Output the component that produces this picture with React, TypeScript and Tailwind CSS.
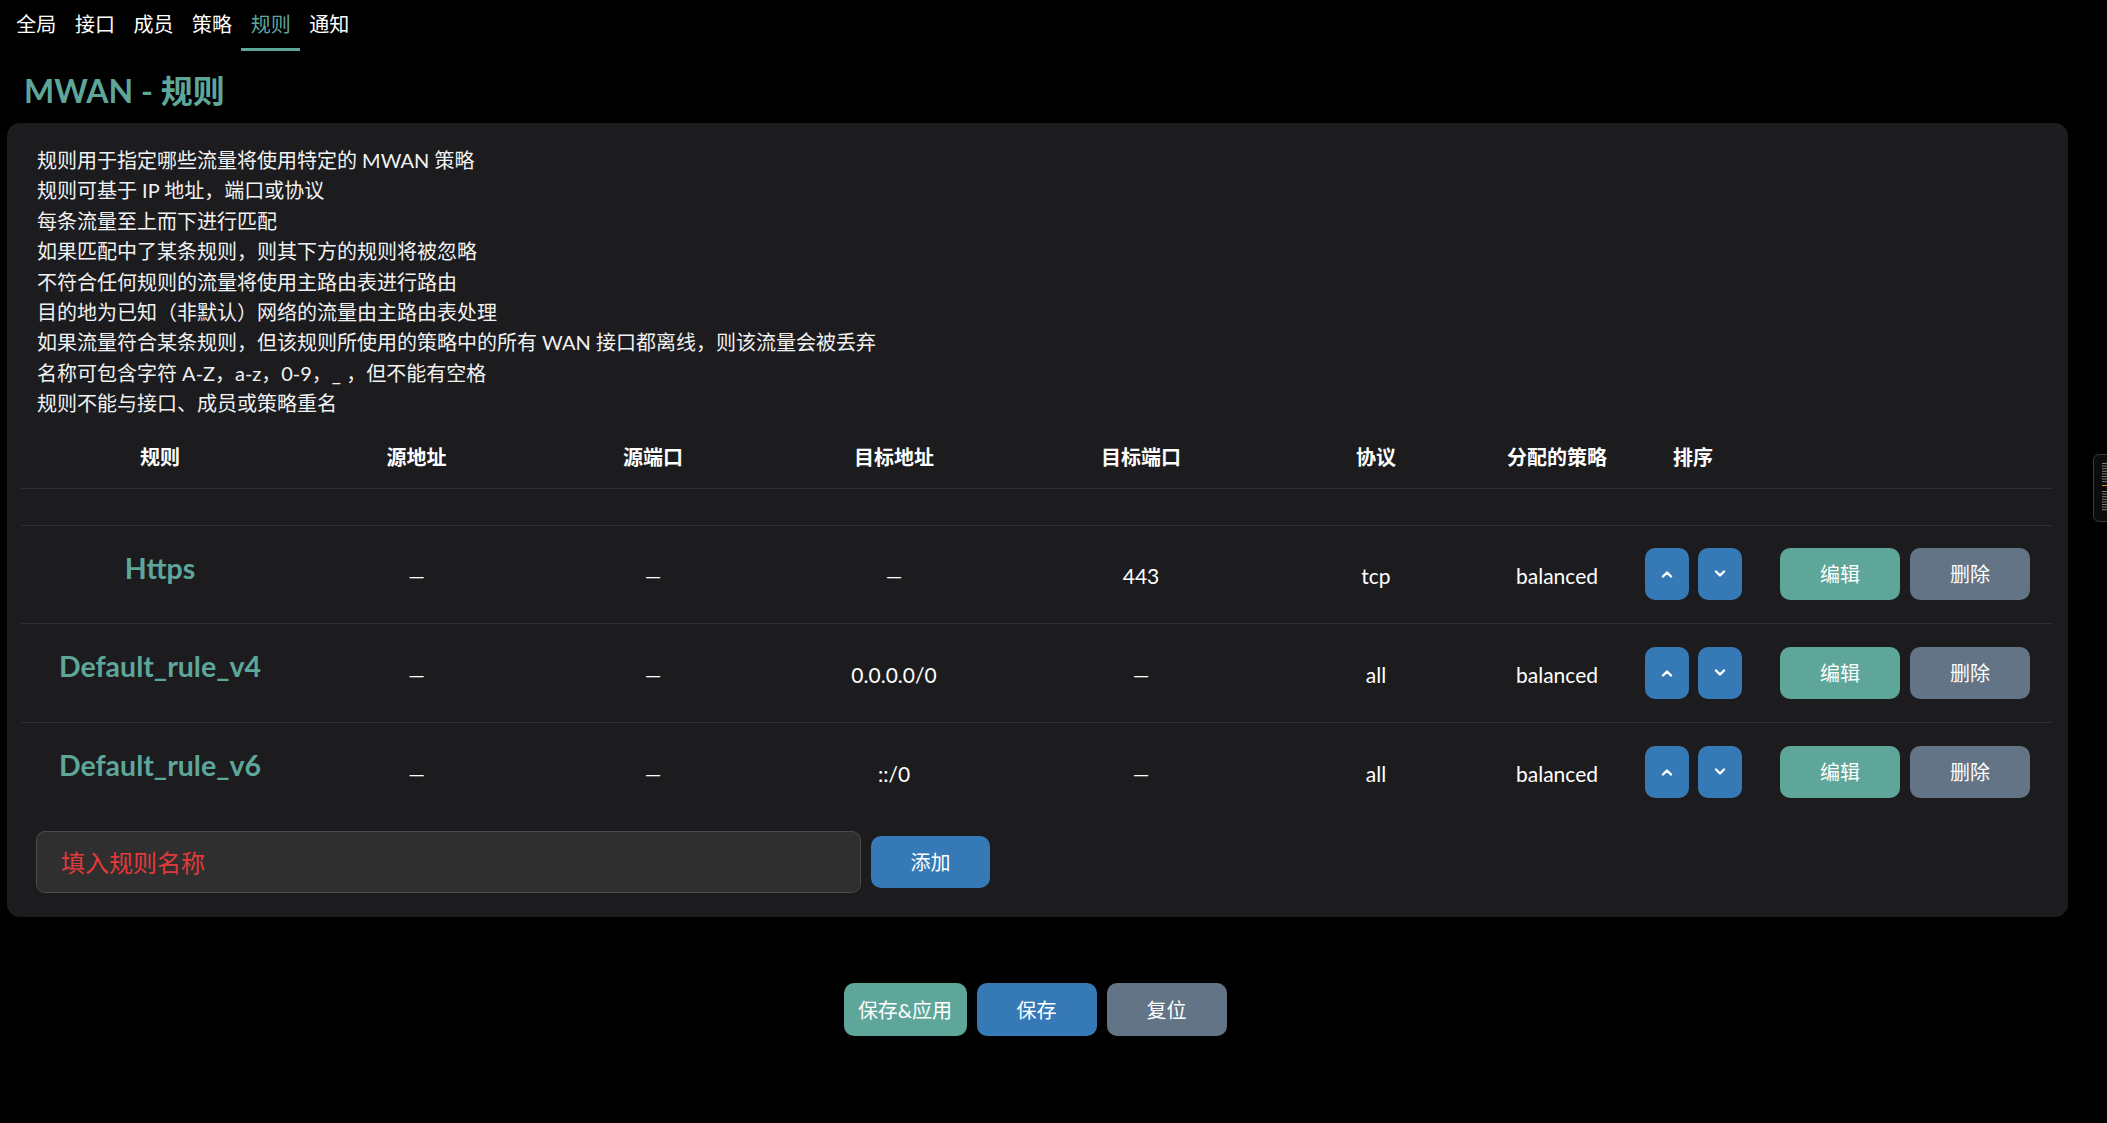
import React from "react";

const tabs = ["全局", "接口", "成员", "策略", "规则", "通知"];

const desc = [
  "规则用于指定哪些流量将使用特定的 MWAN 策略",
  "规则可基于 IP 地址，端口或协议",
  "每条流量至上而下进行匹配",
  "如果匹配中了某条规则，则其下方的规则将被忽略",
  "不符合任何规则的流量将使用主路由表进行路由",
  "目的地为已知（非默认）网络的流量由主路由表处理",
  "如果流量符合某条规则，但该规则所使用的策略中的所有 WAN 接口都离线，则该流量会被丢弃",
  "名称可包含字符 A-Z，a-z，0-9，_ ，但不能有空格",
  "规则不能与接口、成员或策略重名",
];

const headers = ["规则", "源地址", "源端口", "目标地址", "目标端口", "协议", "分配的策略", "排序", ""];

const rows = [
  { name: "Https", src: "—", sport: "—", dst: "—", dport: "443", proto: "tcp", policy: "balanced" },
  { name: "Default_rule_v4", src: "—", sport: "—", dst: "0.0.0.0/0", dport: "—", proto: "all", policy: "balanced" },
  { name: "Default_rule_v6", src: "—", sport: "—", dst: "::/0", dport: "—", proto: "all", policy: "balanced" },
];

const grid = "grid grid-cols-[278px_235px_238px_244px_250px_220px_142px_130px_1fr] items-center";

function Chevron({ up }: { up?: boolean }) {
  return (
    <svg width="12" height="8" viewBox="0 0 12 8" fill="none">
      <polyline
        points={up ? "2,6.5 6,2.5 10,6.5" : "2,1.5 6,5.5 10,1.5"}
        stroke="white"
        strokeWidth="2.4"
        strokeLinecap="round"
        strokeLinejoin="round"
      />
    </svg>
  );
}

function Cell({ v }: { v: string }) {
  return <div className="pt-[3px] text-center text-[21px] text-white">{v}</div>;
}

export default function App() {
  return (
    <div className="relative min-h-[1123px] bg-black font-[Lato,'Noto_Sans_CJK_SC',sans-serif] text-white">
      {/* tabs */}
      <div className="flex pl-[7px]">
        {tabs.map((t) => (
          <div
            key={t}
            className={
              "px-[9.3px] pt-[10px] pb-[10px] text-[20px] leading-[28px] border-b-[3px] " +
              (t === "规则" ? "border-[#5ea69a] text-[#5ea69a]" : "border-transparent text-white")
            }
          >
            {t}
          </div>
        ))}
      </div>

      {/* title */}
      <h2 className="mt-[20px] pl-[24px] text-[32px] leading-[40px] font-bold text-[#5ea69a]">MWAN - 规则</h2>

      <div className="pl-[7px] pr-[39px]">
        {/* card */}
        <div className="mt-[12px] rounded-[13px] bg-[#1c1c1e] pt-[22px] pb-[24px]">
          <div className="px-[30px] text-[20px] leading-[30.4px] text-[#f2f2f2] mb-[8px]">
            {desc.map((d) => (
              <div key={d}>{d}</div>
            ))}
          </div>

          <div className="ml-[14px] mr-[16px]">
            <div className={grid + " h-[62px] border-b border-[#303032]"}>
              {headers.map((h, i) => (
                <div key={i} className="text-center text-[20px] font-bold text-white">
                  {h}
                </div>
              ))}
            </div>
            <div className="h-[37px] border-b border-[#303032]" />
            {rows.map((r, idx) => (
              <div
                key={r.name}
                className={grid + " h-[98.5px] " + (idx < rows.length - 1 ? "border-b border-[#303032]" : "")}
              >
                <div className="pb-[13px] text-center text-[28.5px] font-bold text-[#5ea69a]">{r.name}</div>
                <Cell v={r.src} />
                <Cell v={r.sport} />
                <Cell v={r.dst} />
                <Cell v={r.dport} />
                <Cell v={r.proto} />
                <Cell v={r.policy} />
                <div className="flex justify-center gap-[9px]">
                  <button className="flex h-[52px] w-[44px] items-center justify-center rounded-[10px] bg-[#357ab7]">
                    <Chevron up />
                  </button>
                  <button className="flex h-[52px] w-[44px] items-center justify-center rounded-[10px] bg-[#357ab7]">
                    <Chevron />
                  </button>
                </div>
                <div className="flex justify-center gap-[10px]">
                  <button className="h-[52px] w-[120px] rounded-[10px] bg-[#5ea69a] text-[20px] text-white">编辑</button>
                  <button className="h-[52px] w-[120px] rounded-[10px] bg-[#627486] text-[20px] text-white">删除</button>
                </div>
              </div>
            ))}
          </div>

          <div className="mt-[10px] flex items-center gap-[10px] px-[29px]">
            <input
              className="h-[62px] w-[825px] rounded-[9px] border border-[#4a4a4c] bg-[#2f2f2f] pl-[24px] text-[24px] text-white outline-none placeholder:text-[#e23a3a]"
              placeholder="填入规则名称"
            />
            <button className="h-[52px] w-[119px] rounded-[10px] bg-[#357ab7] text-[20px] text-white">添加</button>
          </div>
        </div>

        {/* bottom actions */}
        <div className="mt-[66px] flex justify-center gap-[10px] pr-[5px]">
          <button className="h-[53px] w-[123px] rounded-[10px] bg-[#5ea69a] text-[20px] text-white">保存&amp;应用</button>
          <button className="h-[53px] w-[120px] rounded-[10px] bg-[#357ab7] text-[20px] text-white">保存</button>
          <button className="h-[53px] w-[120px] rounded-[10px] bg-[#627486] text-[20px] text-white">复位</button>
        </div>
      </div>

      {/* right edge handle */}
      <div className="absolute left-[2093px] top-[454px] h-[68px] w-[24px] rounded-[6px] border border-[#3a3a3a] bg-[#0c0c0c]">
        <svg className="absolute left-[8px] top-[8px]" width="12" height="50" viewBox="0 0 12 50">
          {Array.from({ length: 8 }).map((_, i) => (
            <rect key={"a" + i} x="0" y={i * 2.6} width="12" height="1" fill="#7a7a7a" />
          ))}
          <rect x="0" y="22" width="12" height="1" fill="#d18a2a" />
          {Array.from({ length: 8 }).map((_, i) => (
            <rect key={"b" + i} x="0" y={28 + i * 2.6} width="12" height="1" fill="#7a7a7a" />
          ))}
        </svg>
      </div>
    </div>
  );
}
